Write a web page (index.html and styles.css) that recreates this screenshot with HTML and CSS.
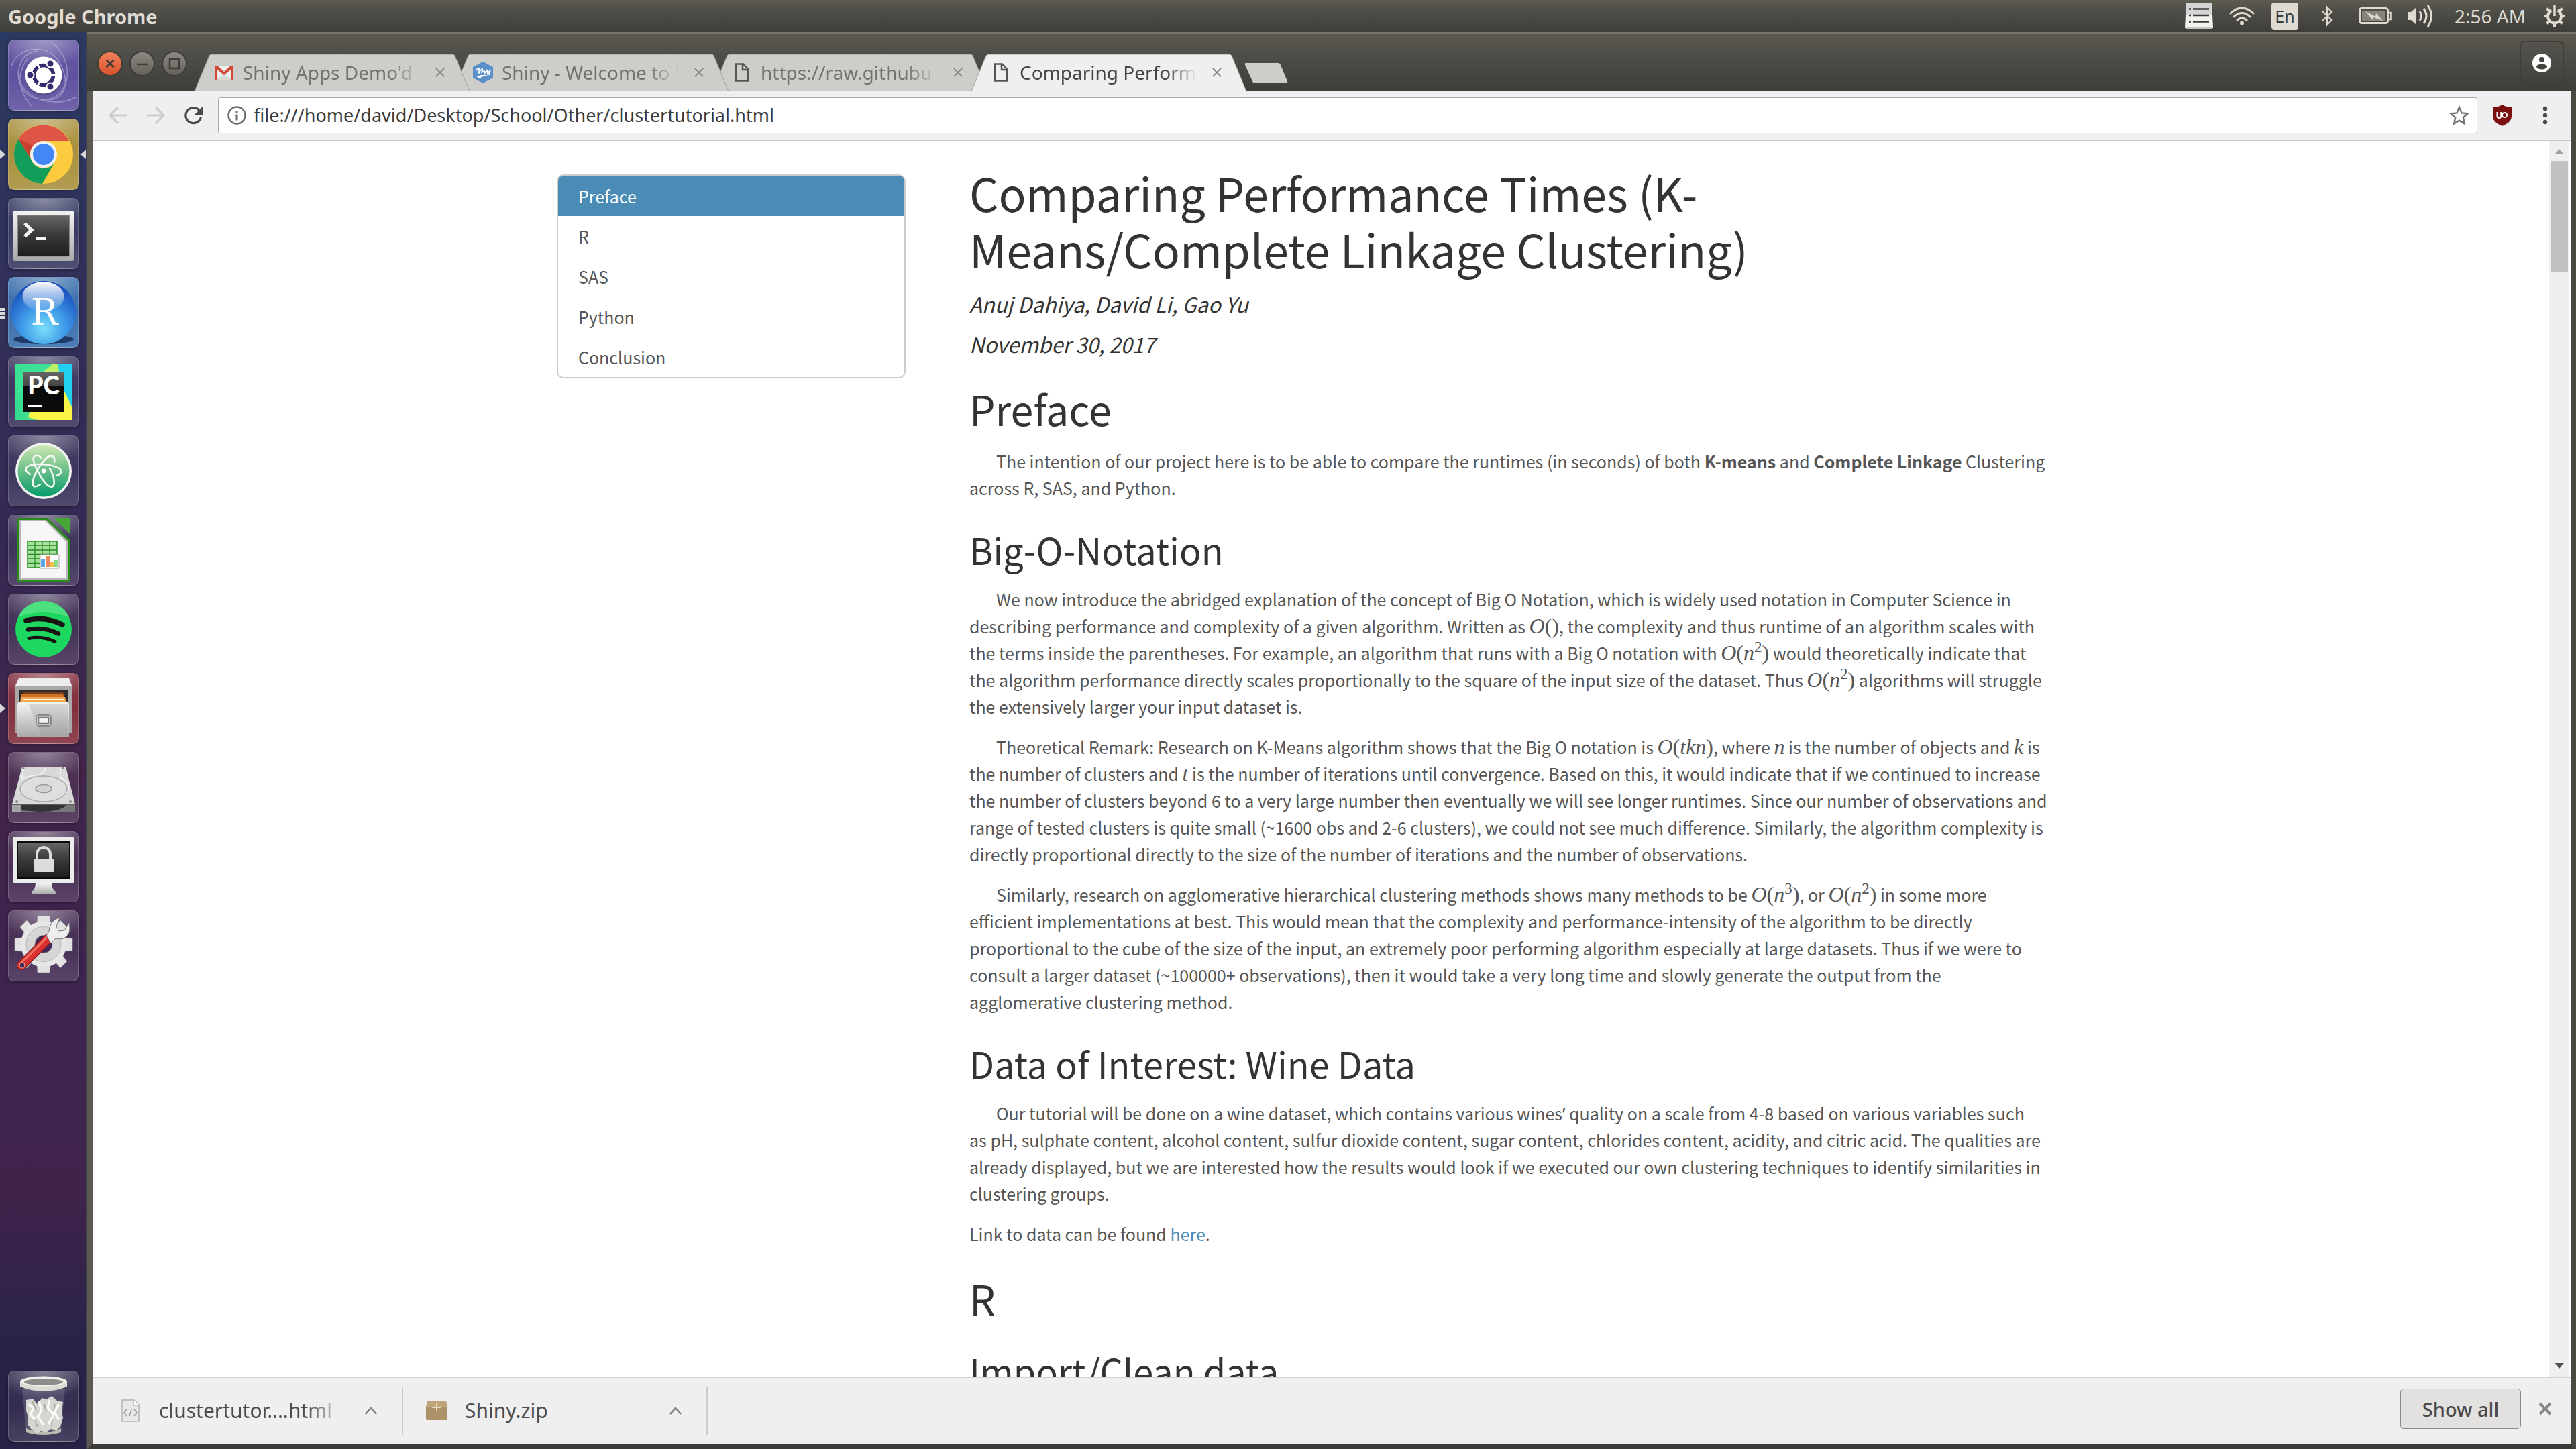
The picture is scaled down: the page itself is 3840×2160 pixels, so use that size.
FILE: index.html
```html
<!DOCTYPE html>
<html lang="en">
<head>
<meta charset="utf-8">
<title>Comparing Performance Times</title>
<link rel="stylesheet" href="styles.css">
</head>
<body>
<div class="desktop">
  <header class="panel">
    <span class="panel-title">Google Chrome</span>
    <div class="indicators">
      <svg class="ind ind-list" width="42" height="40" viewBox="0 0 42 40"><path d="M1 1h40v19H1z" fill="#d6d5d5"/><path d="M1 19h40l1 18H0z" fill="#f3f2f1"/><path d="M1 36h40v3H1z" fill="#c4c3c1"/><path d="M6 9.500h3M12 9.500h24M6 19h3M12 19h24M6 28.500h3M12 28.500h24" stroke="#3c3b37" stroke-width="2.500"/></svg>
      <svg class="ind ind-wifi" width="38" height="28" viewBox="0 0 38 28" fill="none" stroke="#dfdbd2" stroke-width="3" stroke-linecap="round"><path d="M2 10q17-16 34 0M7 15q12-11 24 0M12 20q7-6 14 0"/><circle cx="19" cy="24.500" r="1.500" fill="#dfdbd2"/></svg>
      <span class="ind keyboard">En</span>
      <svg class="ind ind-bt" width="18" height="32" viewBox="0 0 18 32" fill="none" stroke="#dfdbd2" stroke-width="2.200"><path d="M2 9l14 13-7 7V3l7 7L2 23"/></svg>
      <svg class="ind ind-bat" width="50" height="26" viewBox="0 0 50 26"><rect x="1.500" y="1.500" width="42" height="22" rx="3" fill="none" stroke="#dfdbd2" stroke-width="3"/><path d="M44 8h3.500v10H44" fill="none" stroke="#dfdbd2" stroke-width="2.500"/><path d="M5 5h35v15H5z" fill="#85837c"/><path d="M10 6l15 8 1-5 10 11-14-5-1 4z" fill="#dfdbd2"/></svg>
      <svg class="ind ind-vol" width="42" height="36" viewBox="0 0 42 36"><path d="M1 12h5l8-7v26l-8-7H1z" fill="#dfdbd2"/><path d="M19 11q5 7 0 14M25 7q8 11 0 22M31 2q11 16 0 32" fill="none" stroke="#dfdbd2" stroke-width="3"/></svg>
      <span class="clock">2:56 AM</span>
      <svg class="ind" width="34" height="34" viewBox="0 0 34 34" fill="none" stroke="#dfdbd2"><path d="M12.500 8.500a10 10 0 1 0 9 0" stroke-width="4"/><path d="M17 1v16" stroke-width="3.500"/><path d="M17 28v5M1 17h5M28 17h5M5.500 5.500l4 4M28.500 5.500l-4 4M5.500 28.500l4-4M28.500 28.500l-4-4" stroke-width="4"/></svg>
    </div>
  </header>

  <nav class="launcher" aria-label="Launcher">
    <button class="tile tile-dash" aria-label="Search">
      <svg viewBox="0 0 106 106"><path d="M5 40C12 12 56 4 74 30s16 60-16 60M66 5c30 26 26 60 10 76s-50 8-58-14 2-48 26-50M101 86C70 102 26 90 17 60M36 100C14 76 12 50 30 28" fill="none" stroke="#c7bfe0" stroke-width="1.500" opacity=".55"/><circle cx="53" cy="55" r="28" fill="#000" opacity=".2"/><circle cx="53" cy="53" r="27.500" fill="#fff"/><circle cx="53" cy="53" r="14.500" fill="none" stroke="#342a6e" stroke-width="5.500"/><path d="M53 53h22M53 53L42 34M53 53L42 72" stroke="#fff" stroke-width="3"/><circle cx="53" cy="53" r="11" fill="#fff"/><g fill="#342a6e" stroke="#fff" stroke-width="2"><circle cx="33" cy="53" r="5.500"/><circle cx="63" cy="36" r="5.500"/><circle cx="63" cy="70" r="5.500"/></g></svg>
    </button>
    <button class="tile tile-chrome focused running" aria-label="Google Chrome">
      <svg viewBox="0 0 106 106"><circle cx="53" cy="53" r="44" fill="#fdcb3e"/><path d="M15.500 30A44 44 0 0 1 91.500 33H53a20 20 0 0 0-19 26z" fill="#de5446"/><path d="M15.500 30A44 44 0 0 0 51 97l18-31a20 20 0 0 1-35-6z" fill="#129e5a"/><path d="M15.500 30l18 30a20 20 0 0 1 4-20z" fill="#b93325" opacity=".6"/><circle cx="53" cy="53" r="20" fill="#f1f1f1"/><circle cx="53" cy="53" r="16" fill="#4386f5"/></svg>
    </button>
    <button class="tile" aria-label="Terminal">
      <svg viewBox="0 0 106 106"><defs><linearGradient id="sil" x2="0" y2="1"><stop stop-color="#f4f4f4"/><stop offset="1" stop-color="#a9a9a9"/></linearGradient><linearGradient id="blk" x2="0" y2="1"><stop stop-color="#666"/><stop offset=".45" stop-color="#3c3c3c"/><stop offset="1" stop-color="#1d1d1d"/></linearGradient></defs><rect x="8" y="19" width="90" height="75" rx="2" fill="url(#sil)"/><rect x="14.500" y="26" width="77" height="61" fill="url(#blk)" stroke="#888"/><path d="M23 39l4-2 12 11-12 11-4-3 8-8z" fill="#f4f4f4"/><path d="M41 59h16v4H41z" fill="#f4f4f4"/></svg>
    </button>
    <button class="tile tile-rstudio multi" aria-label="RStudio">
      <svg viewBox="0 0 106 106"><defs><radialGradient id="rs" cx=".5" cy=".75" r=".75"><stop stop-color="#79e0fb"/><stop offset=".45" stop-color="#3f9ae8"/><stop offset="1" stop-color="#1346b8"/></radialGradient><linearGradient id="gl" x2="0" y2="1"><stop stop-color="#fff"/><stop offset="1" stop-color="#fff" stop-opacity=".05"/></linearGradient></defs><ellipse cx="53" cy="93" rx="45" ry="7" fill="#1e3a66"/><ellipse cx="53" cy="53" rx="48" ry="47" fill="url(#rs)"/><ellipse cx="52.500" cy="29" rx="31" ry="22" fill="url(#gl)"/><text x="54" y="71" text-anchor="middle" class="r-letter">R</text></svg>
    </button>
    <button class="tile" aria-label="PyCharm">
      <svg viewBox="0 0 106 106"><defs><linearGradient id="pc"><stop stop-color="#35dc94"/><stop offset="1" stop-color="#69e06a"/></linearGradient></defs><path d="M11 11h84v84H11z" fill="url(#pc)"/><path d="M75 11h20v66L78 40z" fill="#21cff0"/><path d="M11 11h60L50 24 11 70z" fill="#3de195"/><path d="M53 23l14-12h6l10 38-20-20z" fill="#bff06a"/><path d="M83 50l12 25v20H44l-14-4 3-12h50z" fill="#fbf548"/><path d="M23 23h60v60H23z" fill="url(#blk)"/><path d="M23 45h60v38H23z" fill="#0b0b0b"/><text x="53" y="57" text-anchor="middle" class="pc-letters">PC</text><path d="M29 72h22v4H29z" fill="#fff"/></svg>
    </button>
    <button class="tile" aria-label="Atom">
      <svg viewBox="0 0 106 106"><defs><linearGradient id="at" x2="0" y2="1"><stop stop-color="#cfe8b4"/><stop offset=".5" stop-color="#66bd87"/><stop offset="1" stop-color="#069c6c"/></linearGradient></defs><circle cx="53" cy="53" r="42" fill="#f1f3f0"/><circle cx="53" cy="53" r="38.500" fill="url(#at)"/><g fill="none" stroke="#f4f8f2" stroke-width="2.600" stroke-linecap="round"><path d="M33 58C22 52 24 43 46 43s35 6 33 12c-1 3-4 4-7 5"/><path d="M50 34C44 27 36 29 38 38s14 32 22 37 10-2 8-11-4-12-6-15"/><path d="M69 40c2-10-5-13-13-5S39 57 37 68s5 9 11 5"/></g><circle cx="53" cy="53" r="3.400" fill="#fff"/></svg>
    </button>
    <button class="tile" aria-label="LibreOffice Calc">
      <svg viewBox="0 0 106 106"><path d="M16 5h43l34 33v61q0 2-2 2H16q-2 0-2-2V7q0-2 2-2z" fill="#2c8a1c"/><path d="M17 8h40l33 32v58H17z" fill="#b7b7b7"/><path d="M20 10h36l30 30v55H20z" fill="#f6f6f6"/><path d="M68 5h23q2 0 2 2v23z" fill="#46a636"/><path d="M29 40h44v39H29z" fill="#a9dfa0" stroke="#278f1c" stroke-width="1.500"/><path d="M29 46h44M29 53h44M29 59.500h44M29 66h44M29 72.500h44M40 40v39M51 40v39M62 40v39" stroke="#278f1c" stroke-width="1.300"/><path d="M48 60h28v20H48z" fill="#fff" stroke="#aaa"/><path d="M49 66h6v12h-6z" fill="#5aa9e6"/><path d="M56 62h6v16h-6z" fill="#e98b5c"/><path d="M63 71h5v7h-5z" fill="#f0c04a"/><path d="M69 68h6v10h-6z" fill="#8bdc8a"/></svg>
    </button>
    <button class="tile" aria-label="Spotify">
      <svg viewBox="0 0 106 106"><circle cx="53" cy="53" r="42" fill="#1ed760"/><path d="M15 35a42 42 0 0 1 76 0q-38-14-76 0z" fill="#6be894" opacity=".6"/><g fill="none" stroke="#191414" stroke-linecap="round"><path d="M27 40q28-7 54 6" stroke-width="7.500"/><path d="M30 53.500q24-5 45 6" stroke-width="6.500"/><path d="M31 66.500q21-4 39 5" stroke-width="5"/></g></svg>
    </button>
    <button class="tile tile-files running" aria-label="Files">
      <svg viewBox="0 0 106 106"><path d="M16 8h75l4 11v70H11V19z" fill="#a9a9a9"/><path d="M16 8h75l4 11H11z" fill="#ededed"/><path d="M17 25h72v22H17z" fill="#2f2b29"/><path d="M24 28h58l3 5H21z" fill="#7b3c1e"/><path d="M20 32h62l3 6H19z" fill="#cf7127"/><path d="M19 36h66l2 10H18z" fill="#f2a957"/><path d="M22 39h61v2H22z" fill="#fff3e0"/><path d="M15 44h75l1 4v47H14V48z" fill="url(#sil)"/><path d="M30 46l20 48h40V46z" fill="#8e8e8e" opacity=".25"/><rect x="42" y="63" width="22" height="16" rx="4" fill="#d8d8d8" stroke="#8b8b8b" stroke-width="2"/><rect x="45.500" y="66.500" width="15" height="9" fill="#f3f3f3" stroke="#777" stroke-width="1.500"/></svg>
    </button>
    <button class="tile" aria-label="Disk">
      <svg viewBox="0 0 106 106"><path d="M21 22h65l14 56v12H6V78z" fill="#5a5a5a"/><path d="M6 79h94v11H6z" fill="#777"/><path d="M19 79h68q-8 10-40 10l-28-2z" fill="#333"/><path d="M6 79h13v11H6z" fill="#a5a5a5"/><path d="M21 22h65l14 56H6z" fill="#d9d9d9"/><path d="M24 24l-4 16q10-4 26-6 8-3 10-10M78 24v14q22 12 6 26" fill="none" stroke="#f4f4f4" stroke-width="1.500"/><ellipse cx="53" cy="55" rx="35" ry="19" fill="#dedede" stroke="#aaa" stroke-width="1.500"/><ellipse cx="53" cy="54.500" rx="12" ry="6" fill="#d3d3d3" stroke="#999" stroke-width="1.500"/><g fill="#888"><circle cx="23" cy="24" r="1.600"/><circle cx="82" cy="24" r="1.600"/><circle cx="13" cy="74" r="2"/><circle cx="93" cy="74" r="2"/></g></svg>
    </button>
    <button class="tile" aria-label="Lock screen">
      <svg viewBox="0 0 106 106"><rect x="7" y="9" width="92" height="68" rx="2" fill="#ececec"/><path d="M13 15h80v56H13z" fill="#0c0c0c"/><path d="M15 17h76v52H15z" fill="url(#blk)"/><path d="M41 77h24q0 9 6 13v4H35v-4q6-4 6-13z" fill="url(#sil)"/><path d="M43 42v-8a10 10 0 0 1 20 0v8" fill="none" stroke="#dcdcdc" stroke-width="4"/><rect x="39" y="41" width="30" height="20" rx="1" fill="#dcdcdc"/></svg>
    </button>
    <button class="tile" aria-label="System settings">
      <svg viewBox="0 0 106 106"><g fill="#e2e2e2" stroke="#999" stroke-width=".8"><path d="M43 20l1-12h18l1 12zM43 81l1 12h18l1-12zM21 41l-11 1v18l11 1zM85 41l11 1v18l-11 1zM36 24l-8-9-10 10 7 9zM70 24l8-9 10 10-7 9zM36 77l-8 9-10-10 7-9zM70 77l8 9 10-10-7-9z"/></g><circle cx="53" cy="50.500" r="34" fill="#e6e6e6"/><circle cx="53" cy="50.500" r="26" fill="#d6d6d6" stroke="#b5b5b5"/><circle cx="53" cy="50.500" r="13" fill="#45285a" stroke="#888"/><path d="M20 82l40-40" stroke="#7d1414" stroke-width="14" stroke-linecap="round"/><path d="M20 82l40-40" stroke="#d93131" stroke-width="12" stroke-linecap="round"/><path d="M20 78l38-38" stroke="#f0765f" stroke-width="3" stroke-linecap="round"/><path d="M57 38q5-6 5-12 3-12 15-15l-5 13 4 7 8-1 7-11q4 17-8 23-6 2-12 0l-7 7z" fill="#eee" stroke="#777"/><circle cx="21" cy="82" r="4" fill="#45285a" stroke="#f5a08c"/></svg>
    </button>
    <button class="tile tile-trash" aria-label="Trash">
      <svg viewBox="0 0 106 106"><path d="M21 28h64l-6 62q-26 10-52 0z" fill="#cfcfe0" opacity=".18"/><path d="M27 86q26 12 52 0v6q-26 8-52 0z" fill="#b9bbb0"/><path d="M27 44l10-2 6 8 8-9 6 2 8-5 8 7 9 2-2 14 2 10-4 12-6 6-8-2-7 5-8-2-6 4-8-6-6-8 1-10-3-10z" fill="#d5d6d0"/><path d="M30 50l8 6-5 10 8 8M46 46l4 14-6 9 9 12M62 44l-3 12 9 10-8 14M76 50l-7 12 7 12" fill="none" stroke="#f8f8f5" stroke-width="3.500"/><path d="M36 46l6 14M54 50l3 12M70 50l-2 10M40 74l4 10M66 72l-1 12" stroke="#9fa09a" stroke-width="1.500"/><path d="M18 15v9q35 14 70 0v-9z" fill="#dadbd3"/><ellipse cx="53" cy="16" rx="35" ry="7.500" fill="#f0f0ea"/><ellipse cx="53" cy="17" rx="29" ry="5" fill="#8c8d8a"/></svg>
    </button>
  </nav>

  <div class="window">
    <div class="titlebar">
      <div class="controls">
        <button class="ctl ctl-close" aria-label="Close"><svg viewBox="0 0 34 34"><path d="M11.500 11.500l11 11M22.500 11.500l-11 11"/></svg></button>
        <button class="ctl" aria-label="Minimize"><svg viewBox="0 0 34 34"><path d="M9 18h16"/></svg></button>
        <button class="ctl" aria-label="Maximize"><svg viewBox="0 0 34 34"><path d="M10 10h14v14H10z"/></svg></button>
      </div>
      <div class="tabs">
        <div class="tab tab-1">
          <svg class="shape" viewBox="0 0 410 56" preserveAspectRatio="none"><path d="M0 56L22 3Q23 1 26 1H384Q387 1 388 3L410 56"/></svg>
          <svg class="fav" width="28" height="28" viewBox="0 0 28 28"><path d="M2 4h24v21H2z" fill="#ececec"/><path d="M2 25l12-9 12 9z" fill="#d8d8d8"/><path d="M2 4h2l10 9L24 4h2l2 2v18q0 1-2 1h-2V10L14 18 4 10v15H2q-2 0-2-2V6z" fill="#d14836"/></svg>
          <span class="tab-title">Shiny Apps Demo'd</span>
          <button class="tab-close" aria-label="Close tab"><svg viewBox="0 0 16 16"><path d="M1 1l14 14M15 1L1 15"/></svg></button>
        </div>
        <div class="tab tab-2">
          <svg class="shape" viewBox="0 0 410 56" preserveAspectRatio="none"><path d="M0 56L22 3Q23 1 26 1H384Q387 1 388 3L410 56"/></svg>
          <svg class="fav fav-shiny" width="32" height="32" viewBox="0 0 32 32"><path d="M16 0l15 8v16l-15 8-15-8V8z" fill="#5b8fc9"/><path d="M6 13q3-5 5-1-4 3-1 5 2-5 5-6l-1 6q3-5 5-2l-1 3 4-5 1 5 4-6-2 8" fill="none" stroke="#fff" stroke-width="1.800"/><path d="M6 22q8-3 18-2-8 1-13 5z" fill="#fff"/></svg>
          <span class="tab-title">Shiny - Welcome to S</span>
          <button class="tab-close" aria-label="Close tab"><svg viewBox="0 0 16 16"><path d="M1 1l14 14M15 1L1 15"/></svg></button>
        </div>
        <div class="tab tab-3">
          <svg class="shape" viewBox="0 0 410 56" preserveAspectRatio="none"><path d="M0 56L22 3Q23 1 26 1H384Q387 1 388 3L410 56"/></svg>
          <svg class="fav" width="28" height="28" viewBox="0 0 28 28"><path d="M5 1.500h11l7 7.500v17.500H5zM15 1.500V10h8" fill="none" stroke="#555" stroke-width="2.500"/></svg>
          <span class="tab-title">https://raw.githubu</span>
          <button class="tab-close" aria-label="Close tab"><svg viewBox="0 0 16 16"><path d="M1 1l14 14M15 1L1 15"/></svg></button>
        </div>
        <div class="tab tab-active">
          <svg class="shape" viewBox="0 0 410 56" preserveAspectRatio="none"><path d="M0 56L22 3Q23 1 26 1H384Q387 1 388 3L410 56"/></svg>
          <svg class="fav" width="28" height="28" viewBox="0 0 28 28"><path d="M5 1.500h11l7 7.500v17.500H5zM15 1.500V10h8" fill="none" stroke="#555" stroke-width="2.500"/></svg>
          <span class="tab-title">Comparing Perform</span>
          <button class="tab-close" aria-label="Close tab"><svg viewBox="0 0 16 16"><path d="M1 1l14 14M15 1L1 15"/></svg></button>
        </div>
      </div>
      <button class="newtab" aria-label="New tab"><svg viewBox="0 0 66 32"><path d="M3 1h48q3 0 4 3l10 24q1 3-2 3H17q-3 0-4-3L2 4Q1 1 3 1z" fill="#cfcdca"/></svg></button>
      <button class="account" aria-label="Account"><svg width="28" height="28" viewBox="0 0 28 28"><circle cx="14" cy="14" r="14" fill="#fff"/><circle cx="14" cy="9" r="4" fill="#45443f"/><ellipse cx="14" cy="19.500" rx="8" ry="4" fill="#45443f"/></svg></button>
    </div>

    <div class="toolbar">
      <button class="nav off" aria-label="Back"><svg viewBox="0 0 28 28"><path d="M27 14H3M14 2L2 14l12 12"/></svg></button>
      <button class="nav off" aria-label="Forward"><svg viewBox="0 0 28 28"><path d="M1 14h24M14 2l12 12-12 12"/></svg></button>
      <button class="nav" aria-label="Reload"><svg viewBox="0 0 28 28"><path d="M23 6.500A11.500 11.500 0 1 0 25.500 17"/><path d="M28 1v12H16z" fill="#4a4a4a" stroke="none"/></svg></button>
      <div class="omnibox">
        <svg class="info" width="28" height="28" viewBox="0 0 28 28"><circle cx="14" cy="14" r="12.500" fill="none" stroke="#6b6b6b" stroke-width="2.500"/><path d="M12.500 7h3v3h-3zM12.500 12.500h3v9h-3z" fill="#6b6b6b"/></svg>
        <input class="url" type="text" aria-label="Address" value="file:///home/david/Desktop/School/Other/clustertutorial.html">
        <svg class="star" width="32" height="32" viewBox="0 0 32 32"><path d="M16 4l3.600 8.400 9 .9-6.800 6 2 9L16 23.600 8.200 28.300l2-9-6.800-6 9-.9z" fill="none" stroke="#757575" stroke-width="2.500"/></svg>
      </div>
      <button class="ext" aria-label="uBlock"><svg width="28" height="32" viewBox="0 0 28 32"><path d="M14 0q6 4 14 4v14q0 8-14 14Q0 26 0 18V4q8 0 14-4z" fill="#7b0f10"/><path d="M6.500 11v6a3 3 0 0 0 6 0v-6" fill="none" stroke="#fff" stroke-width="2"/><path d="M12.500 11v7" stroke="#fff" stroke-width="2"/><circle cx="17.500" cy="15.500" r="3.600" fill="none" stroke="#fff" stroke-width="2"/></svg></button>
      <button class="menu" aria-label="Menu"><svg width="8" height="28" viewBox="0 0 8 28" fill="#4a4a4a"><circle cx="4" cy="4" r="3.200"/><circle cx="4" cy="14" r="3.200"/><circle cx="4" cy="24" r="3.200"/></svg></button>
    </div>

    <div class="viewport">
      <div class="page">
        <div class="toc-col">
          <ul class="toc">
            <li class="active"><a href="#preface">Preface</a></li>
            <li><a href="#r">R</a></li>
            <li><a href="#sas">SAS</a></li>
            <li><a href="#python">Python</a></li>
            <li><a href="#conclusion">Conclusion</a></li>
          </ul>
        </div>
        <main class="article">
          <h1 class="title">Comparing Performance Times (K-<br>Means/Complete Linkage Clustering)</h1>
          <h4>Anuj Dahiya, David Li, Gao Yu</h4>
          <h4>November 30, 2017</h4>
          <h1 id="preface">Preface</h1>
          <p class="indent">The intention of our project here is to be able to compare the runtimes (in seconds) of both <b>K-means</b> and <b>Complete Linkage</b> Clustering<br>across R, SAS, and Python.</p>
          <h2>Big-O-Notation</h2>
          <p class="indent">We now introduce the abridged explanation of the concept of Big O Notation, which is widely used notation in Computer Science in<br>describing performance and complexity of a given algorithm. Written as <span class="math"><i>O</i>()</span>, the complexity and thus runtime of an algorithm scales with<br>the terms inside the parentheses. For example, an algorithm that runs with a Big O notation with <span class="math"><i>O</i>(<i>n</i><sup>2</sup>)</span> would theoretically indicate that<br>the algorithm performance directly scales proportionally to the square of the input size of the dataset. Thus <span class="math"><i>O</i>(<i>n</i><sup>2</sup>)</span> algorithms will struggle<br>the extensively larger your input dataset is.</p>
          <p class="indent">Theoretical Remark: Research on K-Means algorithm shows that the Big O notation is <span class="math"><i>O</i>(<i>tkn</i>)</span>, where <span class="math"><i>n</i></span> is the number of objects and <span class="math"><i>k</i></span> is<br>the number of clusters and <span class="math"><i>t</i></span> is the number of iterations until convergence. Based on this, it would indicate that if we continued to increase<br>the number of clusters beyond 6 to a very large number then eventually we will see longer runtimes. Since our number of observations and<br>range of tested clusters is quite small (~1600 obs and 2-6 clusters), we could not see much difference. Similarly, the algorithm complexity is<br>directly proportional directly to the size of the number of iterations and the number of observations.</p>
          <p class="indent">Similarly, research on agglomerative hierarchical clustering methods shows many methods to be <span class="math"><i>O</i>(<i>n</i><sup>3</sup>)</span>, or <span class="math"><i>O</i>(<i>n</i><sup>2</sup>)</span> in some more<br>efficient implementations at best. This would mean that the complexity and performance-intensity of the algorithm to be directly<br>proportional to the cube of the size of the input, an extremely poor performing algorithm especially at large datasets. Thus if we were to<br>consult a larger dataset (~100000+ observations), then it would take a very long time and slowly generate the output from the<br>agglomerative clustering method.</p>
          <h2>Data of Interest: Wine Data</h2>
          <p class="indent">Our tutorial will be done on a wine dataset, which contains various wines<span class="quote">’</span> quality on a scale from 4-8 based on various variables such<br>as pH, sulphate content, alcohol content, sulfur dioxide content, sugar content, chlorides content, acidity, and citric acid. The qualities are<br>already displayed, but we are interested how the results would look if we executed our own clustering techniques to identify similarities in<br>clustering groups.</p>
          <p>Link to data can be found <a href="#data">here</a>.</p>
          <h1 id="r">R</h1>
          <h2>Import/Clean data</h2>
        </main>
      </div>
      <div class="scrollbar">
        <svg class="up" width="14" height="8" viewBox="0 0 14 8"><path d="M7 0l7 8H0z" fill="#a0a0a0"/></svg>
        <div class="thumb"></div>
        <svg class="down" width="14" height="8" viewBox="0 0 14 8"><path d="M0 0h14L7 8z" fill="#505050"/></svg>
      </div>
    </div>

    <div class="downloads">
      <div class="dl">
        <svg class="dl-icon" width="28" height="34" viewBox="0 0 28 34"><path d="M1 1h18l7 7v25H1z" fill="#e9e9e9" stroke="#b5b5b5" stroke-width="1.500"/><path d="M18 1v8h8" fill="#fff" stroke="#b5b5b5" stroke-width="1.500"/><path d="M8 15l-4 5 4 5M19 15l4 5-4 5M15 15l-3 10" fill="none" stroke="#999" stroke-width="1.500"/></svg>
        <span class="dl-name fade">clustertutor….html</span>
        <button class="dl-menu" aria-label="Options"><svg viewBox="0 0 20 12"><path d="M2 11l8-9 8 9"/></svg></button>
      </div>
      <div class="dl">
        <svg class="dl-icon" width="32" height="34" viewBox="0 0 32 34"><path d="M2 3h28l2 9v17q0 2-2 2H2q-2 0-2-2V12z" fill="#ad9168"/><path d="M2 3h28l2 9H0z" fill="#c0a47a"/><path d="M15 5h2v12h-2zM9 11h14v2H9z" fill="#e8dcc4"/></svg>
        <span class="dl-name">Shiny.zip</span>
        <button class="dl-menu" aria-label="Options"><svg viewBox="0 0 20 12"><path d="M2 11l8-9 8 9"/></svg></button>
      </div>
      <button class="show-all">Show all</button>
      <button class="bar-close" aria-label="Close downloads bar"><svg viewBox="0 0 20 20"><path d="M2 2l16 16M18 2L2 18"/></svg></button>
    </div>
  </div>
</div>
</body>
</html>
```
FILE: styles.css
```css
* { box-sizing: border-box; }
html, body { margin: 0; height: 100%; }
body { font-family: "Noto Sans", sans-serif; overflow: hidden; }
button { border: 0; padding: 0; margin: 0; background: none; font: inherit; color: inherit; display: block; }
svg { display: block; }

.desktop {
  height: 100vh;
  display: grid;
  grid-template-columns: 130px minmax(0, 1fr);
  grid-template-rows: 48px minmax(0, 1fr);
}

/* Top panel */
.panel {
  grid-column: 1 / 3;
  display: flex;
  align-items: center;
  justify-content: space-between;
  padding: 0 15px 0 12px;
  background: linear-gradient(#5e5c4f, #504f49 30%, #3e3d39);
  color: #dfdbd2;
  font-size: 28px;
}
.panel-title { font-weight: 700; font-size: 29px; }
.indicators { display: flex; align-items: center; }
.ind-list { margin-right: 24px; }
.ind-wifi { margin-right: 25px; }
.keyboard {
  width: 40px; height: 40px; margin-right: 34px;
  border-radius: 4px; background: #dfdbd2; color: #3c3b37;
  font-size: 25px; line-height: 40px; text-align: center;
}
.ind-bt { margin-right: 38px; }
.ind-bat { margin-right: 22px; }
.ind-vol { margin-right: 29px; }
.clock { width: 132px; white-space: nowrap; }

/* Launcher */
.launcher {
  display: flex;
  flex-direction: column;
  gap: 12px;
  padding: 11px 12px;
  border-right: 2px solid #3a4050;
  background: linear-gradient(#2b3a62 0, #31305a 18%, #352a55 35%, #422449 52%, #3d2550 68%, #40234b 82%, #2a2348 92%, #2a2146);
}
.tile {
  position: relative;
  width: 106px; height: 106px;
  flex: none;
  border-radius: 9px;
  border: 1px solid rgba(255,255,255,.2);
  background:
    radial-gradient(ellipse 70px 40px at 50% 0, rgba(255,255,255,.38), rgba(255,255,255,0)),
    linear-gradient(rgba(255,255,255,.1), rgba(255,255,255,.05) 50%, rgba(255,255,255,.15));
  box-shadow: 0 1px 5px rgba(0,0,0,.4);
}
.tile > svg { width: 106px; height: 106px; margin: -1px; }
.tile-dash { background-color: #57489a; }
.tile-chrome { background-color: #a48b34; }
.tile-rstudio { background-color: #3168a8; }
.tile-files { background-color: #7c2533; }
.tile-trash { margin-top: auto; }
.tile::before, .focused::after {
  position: absolute; top: 45px; width: 8px; height: 14px; background: #d8d8d8;
}
.running::before { content: ""; left: -13px; clip-path: polygon(0 0, 100% 50%, 0 100%); }
.multi::before {
  content: ""; left: -13px; height: 16px;
  background: repeating-linear-gradient(#d8d8d8 0 4px, transparent 4px 6px);
}
.focused::after { content: ""; right: -11px; clip-path: polygon(100% 0, 0 50%, 100% 100%); }
.r-letter { font: 54px "DejaVu Serif", serif; fill: #fff; }
.pc-letters { font: 900 37px Lato, sans-serif; fill: #fff; }

/* Window */
.window {
  display: flex;
  flex-direction: column;
  border: solid #3c3b37;
  border-width: 0 8px 8px;
  border-left-color: #5b5952;
  border-right-color: #4a4943;
  min-height: 0;
}
.titlebar {
  height: 88px; flex: none;
  margin: 0 -8px;
  padding: 3px 18px 0 17px;
  display: flex;
  align-items: flex-end;
  border-top: 3px solid #76746d;
  background: linear-gradient(#595750, #3e3d38);
}
.controls { display: flex; gap: 14px; align-self: center; width: 143px; }
.ctl {
  width: 34px; height: 34px; border-radius: 50%;
  background: linear-gradient(#8b8982, #64625b);
  box-shadow: 0 0 0 2px #3c3b37;
}
.ctl-close { background: linear-gradient(#f0805a, #d9532a); }
.ctl svg { fill: none; stroke: #3c3b37; stroke-width: 2.5; }

.tabs { display: flex; height: 56px; padding-right: 24px; }
.tab {
  position: relative;
  width: 410px; height: 56px;
  margin-right: -24px;
  padding: 0 37px 0 30px;
  display: flex;
  align-items: center;
  color: #74726f;
}
.tab-1 { z-index: 3; }
.tab-2 { z-index: 2; }
.tab-3 { z-index: 1; }
.tab-active { z-index: 4; color: #454545; }
.shape { position: absolute; inset: 0; width: 100%; height: 100%; fill: #cfcdca; stroke: #a3a19e; stroke-width: 1; }
.tab::after { content: ""; position: absolute; left: 0; right: 0; bottom: 0; height: 1px; background: #aaa8a5; }
.tab-active .shape { fill: #efefef; }
.tab-active::after { background: #efefef; }
.fav { position: relative; flex: none; margin-right: 14px; }
.fav-shiny { margin: 0 12px 0 -2px; }
.tab-title {
  position: relative;
  flex: 1; overflow: hidden; white-space: nowrap;
  font-size: 28px; line-height: 40px;
  -webkit-mask-image: linear-gradient(90deg, #000 82%, transparent);
  mask-image: linear-gradient(90deg, #000 82%, transparent);
}
.tab-close { position: relative; width: 14px; height: 14px; margin-left: 22px; flex: none; }
.tab-close svg { stroke: #85837f; stroke-width: 2.2; }
.newtab { width: 66px; margin: 0 0 11px -4px; }
.account {
  width: 66px; height: 66px; margin: 0 0 9px auto;
  display: flex; align-items: center; justify-content: center;
  border: 2px solid #3e3d38; border-radius: 8px;
}

.toolbar {
  height: 74px; flex: none;
  display: flex; align-items: center;
  padding: 0 34px 2px 24px;
  background: #efefef;
  border-bottom: 1px solid #cacaca;
}
.nav { width: 28px; height: 28px; margin-right: 28px; flex: none; }
.nav svg { fill: none; stroke: #4a4a4a; stroke-width: 3.2; }
.off svg { stroke: #cdcdcd; }
.nav:nth-child(3) { margin-right: 23px; }
.omnibox {
  flex: 1; height: 54px;
  display: flex; align-items: center;
  padding: 0 10px 0 13px;
  background: #fff; border: 1px solid #a9a9a9; border-radius: 3px;
}
.url {
  flex: 1; min-width: 0; height: 50px; margin-left: 11px; padding: 0;
  border: 0; outline: 0; background: transparent;
  font: 27px "Noto Sans", sans-serif; color: #3b3b3b;
}
.ext { margin-left: 23px; }
.menu { margin-left: 46px; }

/* Document */
.viewport { flex: 1; min-height: 0; display: flex; background: #fff; overflow: hidden; padding-right: 2px; }
.page {
  flex: 1; min-width: 0; overflow: hidden;
  display: flex; justify-content: center; align-items: flex-start;
  font-family: "Noto Sans CJK SC", sans-serif;
  font-size: 25px; line-height: 40px; color: #555;
}
.toc-col { width: 585px; padding: 50px 34px 0 31px; flex: none; }
.toc {
  list-style: none; margin: 0; padding: 0;
  border: 2px solid #ccc; border-radius: 10px; overflow: hidden;
}
.toc a { display: block; padding: 10px 30px; color: #555; text-decoration: none; }
.toc .active a { background: #4a8cb6; color: #fff; }
.article { width: 1755px; padding: 35px 80px 0 61px; }
h1, h2, h4 { font-weight: 400; color: #333; }
h1 { font-size: 61px; line-height: 72px; margin: 40px 0 22px; }
h2 { font-size: 54px; line-height: 60px; margin: 42px 0 24px; }
h4 { font-size: 31px; line-height: 40px; margin: 20px 0; font-style: italic; }
.title { font-size: 68px; line-height: 84px; margin: 0 0 18px; }
p { margin: 0 0 20px; }
.indent { text-indent: 40px; }
.article a { color: #4a8cb6; text-decoration: none; }
.quote { font-family: "Noto Sans", sans-serif; line-height: 0; }
.math { font-family: "Liberation Serif", serif; font-size: 32px; line-height: 0; white-space: nowrap; }
.math sup { font-size: 23px; line-height: 0; }

.scrollbar {
  width: 30px; flex: none;
  display: flex; flex-direction: column; align-items: center;
  padding: 12px 0;
  background: #efefef;
}
.thumb { width: 26px; height: 166px; margin: 10px 0 auto; background: #c1c1c1; }

/* Downloads shelf */
.downloads {
  height: 100px; flex: none;
  display: flex; align-items: center;
  padding-right: 28px;
  background: #efefef;
  border-top: 2px solid #d3d3d3;
  color: #4c4c4c;
}
.dl {
  width: 463px; height: 72px; flex: none;
  display: flex; align-items: center;
  padding: 0 36px 0 43px;
  border-right: 2px solid #ccc;
}
.dl + .dl { width: 454px; padding-left: 34px; }
.dl-icon { flex: none; margin-right: 28px; }
.dl + .dl .dl-icon { margin-right: 26px; }
.dl-name { flex: 1; overflow: hidden; white-space: nowrap; font-size: 30px; line-height: 44px; }
.fade {
  -webkit-mask-image: linear-gradient(90deg, #000 78%, transparent);
  mask-image: linear-gradient(90deg, #000 78%, transparent);
}
.dl-menu { width: 20px; height: 12px; margin-left: 26px; }
.dl-menu svg { fill: none; stroke: #808080; stroke-width: 2.6; }
.show-all {
  width: 180px; height: 60px; margin: 0 0 6px auto;
  background: #e2e1df; border: 1px solid #8a8a8a; border-radius: 5px;
  font-size: 29px; font-weight: 500; color: #4a4a4a;
}
.bar-close { width: 20px; height: 20px; margin: 0 0 6px 26px; }
.bar-close svg { stroke: #888; stroke-width: 4; }
```
